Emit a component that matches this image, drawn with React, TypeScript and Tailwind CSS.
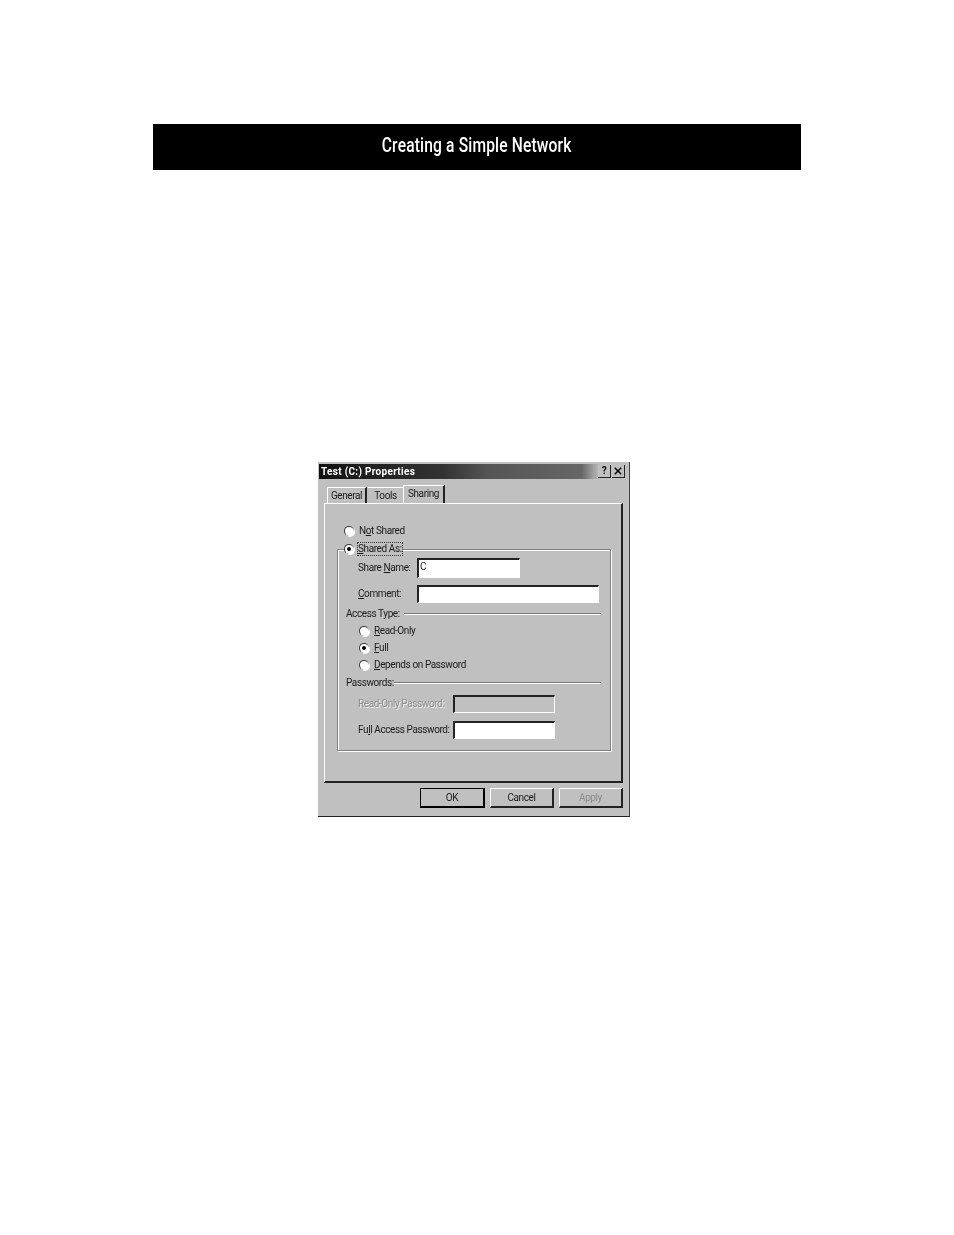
const uiFont = "font-['Roboto','Liberation_Sans',Arial,sans-serif] text-[10px] tracking-[-0.4px] leading-[12px] text-[#1a1a1a]";

function Key({ children }: { children: string }) {
  return <span className="underline underline-offset-1">{children}</span>;
}

function Radio({ checked }: { checked?: boolean }) {
  return (
    <span className="relative block size-[10px] shrink-0 rounded-full bg-white border-t border-l border-[#333] border-r-white border-b-white shadow-[1px_1px_0_#fff]">
      {checked && <span className="absolute left-[2px] top-[2px] size-[4px] rounded-full bg-black" />}
    </span>
  );
}

function Field({ className }: { className: string }) {
  return <div className={`border-t-2 border-l-2 border-t-[#222] border-l-[#222] border-r border-b border-r-white border-b-white ${className}`} />;
}

function Separator({ label, lineClass }: { label: string; lineClass: string }) {
  return (
    <div className="flex items-center justify-between h-[12px] w-[255px]">
      <span className="shrink-0">{label}</span>
      <span className={`h-[2px] bg-[#777] border-b border-white ${lineClass}`} />
    </div>
  );
}

function Button({ label, def, disabled }: { label: string; def?: boolean; disabled?: boolean }) {
  return (
    <div
      className={`flex items-center justify-center h-[20px] border ${
        def
          ? "w-[65px] border-black border-r-2 border-b-2"
          : "w-[64px] border-t-white border-l-white border-r-[#222] border-b-[#222] border-r-2 border-b-2"
      } ${disabled ? "text-[#8c8c8c]" : ""}`}
    >
      {label}
    </div>
  );
}

export default function App() {
  return (
    <div className="w-[954px] h-[1235px] bg-white pt-[124px] overflow-hidden">
      <header className="ml-[153px] w-[648px] h-[46px] bg-black flex items-center justify-center pb-[4px]">
        <h1 className="font-['Roboto',sans-serif] font-medium text-[20px] tracking-[0.2px] text-white scale-x-[0.78] whitespace-nowrap">
          Creating a Simple Network
        </h1>
      </header>

      <div className={`ml-[318px] mt-[292px] w-[312px] h-[355px] bg-[#c0c0c0] border-r border-b border-r-[#444] border-b-[#222] pt-[2px] pl-[1px] blur-[0.35px] ${uiFont}`}>
        <div className="w-[309px] h-[15px] flex items-center justify-between pl-[2px] pr-[3px] bg-[linear-gradient(to_right,#111_0%,#333_40%,#555_55%,#666_85%,#c0c0c0_91%)]">
          <span className="font-bold text-white tracking-[0.3px]">Test (C:) Properties</span>
          <div className="flex gap-[1px]">
            <span className="size-[13px] flex items-center justify-center bg-[#c0c0c0] border-r border-b border-[#222] font-bold text-black">?</span>
            <svg viewBox="0 0 13 13" className="size-[13px] bg-[#c0c0c0] border-r border-b border-[#222]">
              <path d="M3 3l7 7M10 3l-7 7" stroke="#000" strokeWidth="1.6" />
            </svg>
          </div>
        </div>

        <div className="flex items-end h-[24px] pl-[8px]">
          <div className="w-[40px] h-[16px] flex items-center justify-center border-t border-l border-white border-r-2 border-r-[#222]">General</div>
          <div className="w-[35px] h-[16px] flex items-center justify-center border-t border-white ml-[1px]">Tools</div>
          <div className="w-[42px] h-[18px] pb-[1px] flex items-center justify-center border-t border-l border-white border-r-2 border-r-[#222]">Sharing</div>
        </div>

        <div className="ml-[5px] w-[299px] h-[280px] border-t border-l border-white border-r-2 border-b-2 border-r-[#222] border-b-[#222] pt-[21px] pl-[19px]">
          <div className="flex items-center gap-[5px] h-[12px]">
            <Radio />
            <span>N<Key>o</Key>t Shared</span>
          </div>

          <div className="relative ml-[-7px] mt-[12px] w-[274px] h-[202px] border border-[#808080] shadow-[1px_1px_0_#fff,inset_1px_1px_0_#fff] pl-[8px] pt-[8px]">
            <div className="absolute -top-[7px] left-[6px] flex items-center gap-[4px] bg-[#c0c0c0] pr-[1px]">
              <Radio checked />
              <span className="outline-1 outline-dotted outline-[#333]"><Key>S</Key>hared As:</span>
            </div>

            <div className="flex items-center pl-[12px] h-[20px]">
              <span className="w-[59px] whitespace-nowrap">Share <Key>N</Key>ame:</span>
              <div className="relative w-[103px] h-[20px]">
                <Field className="size-full bg-white" />
                <span className="absolute left-[3px] top-[3px]">C</span>
              </div>
            </div>

            <div className="flex items-center pl-[12px] h-[18px] mt-[7px]">
              <span className="w-[59px]"><Key>C</Key>omment:</span>
              <Field className="w-[182px] h-[18px] bg-white" />
            </div>

            <div className="mt-[5px]">
              <Separator label="Access Type:" lineClass="w-[197px]" />
            </div>

            <div className="ml-[13px] mt-[5px] flex flex-col gap-[5px]">
              <div className="flex items-center gap-[5px] h-[12px]"><Radio /><span><Key>R</Key>ead-Only</span></div>
              <div className="flex items-center gap-[5px] h-[12px]"><Radio checked /><span><Key>F</Key>ull</span></div>
              <div className="flex items-center gap-[5px] h-[12px]"><Radio /><span><Key>D</Key>epends on Password</span></div>
            </div>

            <div className="mt-[6px]">
              <Separator label="Passwords:" lineClass="w-[209px]" />
            </div>

            <div className="flex items-center pl-[12px] h-[18px] mt-[6px]">
              <span className="w-[95px] text-[#8c8c8c] [text-shadow:1px_1px_0_#eee] whitespace-nowrap">Read-Only Password:</span>
              <Field className="w-[102px] h-[18px]" />
            </div>

            <div className="flex items-center pl-[12px] h-[18px] mt-[8px]">
              <span className="w-[95px] whitespace-nowrap">Fu<Key>l</Key>l Access Password:</span>
              <Field className="w-[102px] h-[18px] bg-white" />
            </div>
          </div>
        </div>

        <div className="flex justify-end gap-[5px] mt-[5px] pr-[6px]">
          <Button label="OK" def />
          <Button label="Cancel" />
          <Button label="Apply" disabled />
        </div>
      </div>
    </div>
  );
}
